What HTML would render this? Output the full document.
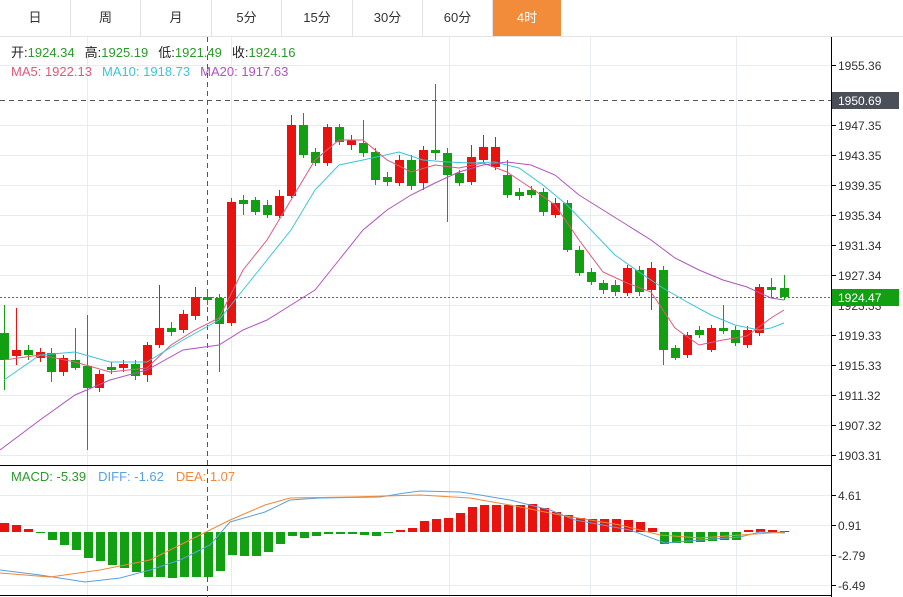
<!DOCTYPE html><html><head><meta charset="utf-8"><style>
body{margin:0;width:903px;height:597px;overflow:hidden;background:#fff;font-family:"Liberation Sans","Noto Sans CJK SC",sans-serif}
.tabs{position:absolute;left:0;top:0;height:36px;width:903px;border-bottom:1px solid #e3e3e3}
.tab{position:absolute;top:0;height:36px;line-height:36px;text-align:center;font-size:13px;color:#333;border-right:1px solid #e3e3e3;box-sizing:border-box}
.act{background:#f28c3b;color:#fff}
</style></head><body>
<div class="tabs">
<div class="tab" style="left:0;width:71px">日</div>
<div class="tab" style="left:71px;width:70px">周</div>
<div class="tab" style="left:141px;width:71px">月</div>
<div class="tab" style="left:212px;width:70px">5分</div>
<div class="tab" style="left:282px;width:71px">15分</div>
<div class="tab" style="left:353px;width:70px">30分</div>
<div class="tab" style="left:423px;width:70px">60分</div>
<div class="tab act" style="left:493px;width:68px;border:none">4时</div>
</div>
<svg width="903" height="597" style="position:absolute;left:0;top:0" font-family="Liberation Sans, Noto Sans CJK SC, sans-serif">
<g stroke="#e6ecf1" stroke-width="1">
<path d="M0 65.5H831M0 125.5H831M0 155.5H831M0 185.5H831M0 215.5H831M0 245.5H831M0 275.5H831M0 305.5H831M0 335.5H831M0 365.5H831M0 395.5H831M0 425.5H831M0 455.5H831M0 495.5H831M0 525.5H831M0 555.5H831M0 585.5H831"/>
<path d="M87.5 37V597M231.5 37V597M449.5 37V597M590.5 37V597M736.5 37V597"/>
</g>
<path d="M831.5 37V597M0 465.5H831M0 595.5H831" stroke="#000" stroke-width="1"/>
<g stroke="#000"><path d="M831 65.5h5M831 125.5h5M831 155.5h5M831 185.5h5M831 215.5h5M831 245.5h5M831 275.5h5M831 335.5h5M831 365.5h5M831 395.5h5M831 425.5h5M831 455.5h5M831 495.5h5M831 525.5h5M831 555.5h5M831 585.5h5"/></g>
<g font-size="12" fill="#333">
<text x="838" y="70">1955.36</text><text x="838" y="130">1947.35</text><text x="838" y="160">1943.35</text><text x="838" y="190">1939.35</text><text x="838" y="220">1935.34</text><text x="838" y="250">1931.34</text><text x="838" y="280">1927.34</text><text x="838" y="310">1923.33</text><text x="838" y="340">1919.33</text><text x="838" y="370">1915.33</text><text x="838" y="400">1911.32</text><text x="838" y="430">1907.32</text><text x="838" y="460">1903.31</text>
<text x="838" y="500">4.61</text><text x="838" y="530">0.91</text><text x="838" y="560">-2.79</text><text x="838" y="590">-6.49</text>
</g>
<path d="M207.5 37V597" stroke="#555" stroke-dasharray="5,4"/>
<path d="M0 100.5H831" stroke="#555" stroke-dasharray="5,4"/>
<rect x="832" y="92" width="67" height="17" fill="#4a4f5a"/><text x="838" y="105" font-size="12" fill="#fff">1950.69</text>
<path d="M0 297.5H831" stroke="#1a9a1a" stroke-dasharray="2,2"/>
<rect x="832" y="289" width="67" height="17" fill="#12a012"/><text x="838" y="302" font-size="12" fill="#fff">1924.47</text>
<g id="c"></g>
<polyline fill="none" stroke="#e0587a" stroke-width="1" points="4,360 40,355 75,362 110,372 147,368 171,345 195,330 219,318 243,270 267,240 291,200 315,160 339,140 363,140 387,160 411,172 435,165 459,168 483,163 507,172 531,188 555,205 579,240 603,272 627,283 651,292 675,328 699,345 723,340 747,336 771,318 784,310"/>
<polyline fill="none" stroke="#3cc4d8" stroke-width="1" points="4,380 40,355 75,352 110,362 147,362 183,340 219,320 243,290 267,260 291,230 315,190 339,165 363,160 399,152 423,160 447,162 471,163 495,162 519,168 543,185 567,205 591,230 615,255 639,272 663,288 687,302 711,315 735,325 759,330 771,328 784,323"/>
<polyline fill="none" stroke="#b052c0" stroke-width="1" points="0,450 40,420 75,395 110,380 147,370 183,350 219,345 243,330 267,320 291,305 315,290 339,260 363,230 387,210 411,195 435,183 459,172 483,165 507,162 531,165 555,175 579,195 603,210 627,225 651,240 675,258 699,270 723,280 747,287 771,298 784,300"/>
<g id="h"></g>
<polyline fill="none" stroke="#5aa0e0" points="0,570 40,575 85,582 120,578 150,570 180,560 210,545 230,522 265,512 290,500 320,498 380,497 405,493 420,491 460,492 480,495 510,500 550,510 575,520 630,530 665,543 700,540 740,537 760,532 785,533"/>
<polyline fill="none" stroke="#f0883a" points="0,573 50,577 100,570 150,560 190,540 230,520 265,505 290,498 350,497 420,495 470,498 510,505 560,515 620,525 660,535 700,538 740,535 785,532"/>
<g font-size="13">
<text x="11" y="57"><tspan fill="#222">开:</tspan><tspan fill="#2a9a2a">1924.34</tspan><tspan fill="#222" dx="10">高:</tspan><tspan fill="#2a9a2a">1925.19</tspan><tspan fill="#222" dx="10">低:</tspan><tspan fill="#2a9a2a">1921.49</tspan><tspan fill="#222" dx="10">收:</tspan><tspan fill="#2a9a2a">1924.16</tspan></text>
<text x="11" y="76"><tspan fill="#e0587a">MA5: 1922.13</tspan><tspan fill="#3cc4d8" dx="10">MA10: 1918.73</tspan><tspan fill="#b052c0" dx="10">MA20: 1917.63</tspan></text>
<text x="11" y="481"><tspan fill="#2a9a2a">MACD: -5.39</tspan><tspan fill="#5aa0e0" dx="12">DIFF: -1.62</tspan><tspan fill="#f0883a" dx="12">DEA: 1.07</tspan></text>
</g>
</svg>
<script>
var R="#e8130f",G="#12a012";
var d=[[4,'g',333,360,305,390],[16,'r',350,356,308,365],[28,'g',350,355,345,360],[40,'r',352,358,348,362],[51,'g',353,372,348,382],[63,'r',358,372,355,376],[75,'g',360,368,328,370],[87,'g',366,388,315,450],[99,'r',374,388,370,392],[111,'g',367,370,362,374],[123,'r',364,368,360,372],[135,'g',364,376,360,380],[147,'r',345,375,342,382],[159,'r',328,345,285,348],[171,'g',328,332,322,336],[183,'r',314,330,310,333],[195,'r',297,316,287,320],[207,'g',297,300,290,305],[219,'g',298,324,294,372],[231,'r',202,323,198,326],[243,'g',200,204,195,215],[255,'g',200,212,197,215],[267,'g',205,215,200,218],[279,'r',196,216,190,218],[291,'r',125,196,115,198],[303,'g',125,155,113,158],[315,'g',152,163,148,166],[327,'r',127,163,124,166],[339,'g',127,142,124,145],[351,'r',140,145,135,150],[363,'g',143,153,120,157],[375,'g',152,180,148,185],[387,'g',177,182,172,186],[399,'r',160,183,155,186],[411,'g',160,186,155,190],[423,'r',150,183,146,190],[435,'g',150,153,84,160],[447,'g',153,175,148,222],[459,'g',173,183,170,186],[471,'r',157,182,145,185],[483,'r',147,160,135,163],[495,'r',147,167,137,170],[507,'g',175,195,160,198],[519,'g',192,196,188,200],[531,'g',190,195,186,198],[543,'g',192,212,188,216],[555,'r',203,215,198,218],[567,'g',203,250,200,252],[579,'g',250,273,246,276],[591,'g',272,282,268,285],[603,'g',283,290,280,294],[615,'g',285,292,280,296],[627,'r',268,293,265,296],[639,'g',270,292,266,296],[651,'r',268,290,262,310],[663,'g',270,350,266,365],[675,'g',348,358,345,360],[687,'r',335,355,332,358],[699,'g',330,335,326,338],[711,'r',328,350,325,352],[723,'g',328,331,305,334],[735,'g',330,343,326,346],[747,'r',330,345,326,348],[759,'r',287,333,284,336],[771,'g',287,290,278,298],[784,'g',288,297,275,300]];
var s='';
d.forEach(function(a){var col=a[1]=='r'?R:G;s+='<line x1="'+(a[0]+.5)+'" x2="'+(a[0]+.5)+'" y1="'+a[4]+'" y2="'+a[5]+'" stroke="'+col+'"/><rect x="'+(a[0]-4)+'" y="'+a[2]+'" width="9" height="'+Math.max(2,a[3]-a[2])+'" fill="'+col+'"/>';});
document.getElementById('c').innerHTML=s;
var hv=[-9,-7,-3,1,8,13,18,26,29,33,36,40,45,45,46,45,45,45,39,23,24,24,20,12,4,6,4,2,2,2,3,4,1,-2,-4,-11,-13,-14,-19,-25,-27,-27,-27,-27,-28,-24,-20,-17,-14,-13,-13,-13,-12,-10,-4,12,11,11,10,9,8,8,-2,-3,-2,-1];
s='';hv.forEach(function(v,i){var x=4+i*12,col=v<0?R:G,y=v<0?532+v:532;s+='<rect x="'+(x-4)+'" y="'+y+'" width="9" height="'+Math.max(1,Math.abs(v))+'" fill="'+col+'"/>';});
document.getElementById('h').innerHTML=s;
</script>
</body></html>
